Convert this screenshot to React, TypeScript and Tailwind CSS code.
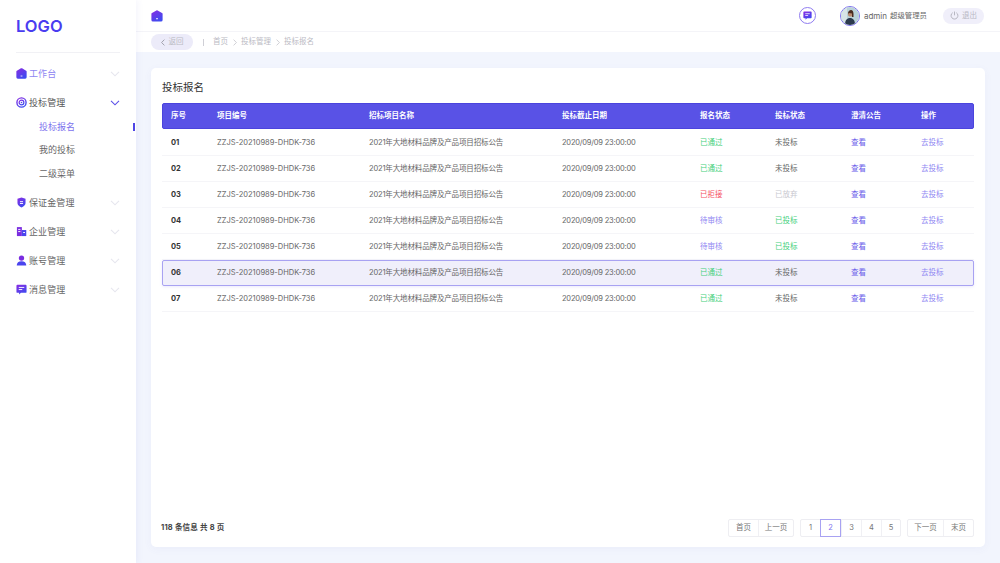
import React from "react";

const font = { fontFamily: '"Inter","Noto Sans CJK SC",sans-serif' };

function Defs() {
  return (
    <svg width="0" height="0" className="absolute">
      <defs>
        <linearGradient id="ig" x1="0" y1="0" x2="0.6" y2="1">
          <stop offset="0" stopColor="#8a2be2" />
          <stop offset="1" stopColor="#3f4bf0" />
        </linearGradient>
      </defs>
    </svg>
  );
}

const IconHome = ({ s = 11 }: { s?: number }) => (
  <svg width={s} height={s} viewBox="0 0 12 12">
    <path d="M5.400.4a1.200 1.200 0 0 1 1.200 0L11 3a1 1 0 0 1 .6.900V10a1.600 1.600 0 0 1-1.600 1.600H2A1.600 1.600 0 0 1 .4 10V3.900A1 1 0 0 1 1 3Z" fill="url(#ig)" />
    <rect x="5" y="8.300" width="2" height="0.900" fill="#fff" />
  </svg>
);
const IconTarget = () => (
  <svg width="11" height="11" viewBox="0 0 12 12" fill="none" stroke="url(#ig)">
    <circle cx="6" cy="6" r="5" strokeWidth="1.500" />
    <circle cx="6" cy="6" r="2.600" strokeWidth="1.300" />
    <circle cx="6" cy="6" r="0.900" fill="#4f46e5" stroke="none" />
  </svg>
);
const IconShield = () => (
  <svg width="11" height="11" viewBox="0 0 12 12">
    <path d="M6 .5 10.400 2v4.600c0 2.300-2.400 4-4.400 4.900-2-.9-4.400-2.600-4.400-4.900V2Z" fill="url(#ig)" />
    <rect x="4.300" y="4.600" width="3.400" height="1" fill="#fff" />
    <rect x="4.300" y="6.600" width="3.400" height="1" fill="#fff" />
  </svg>
);
const IconCompany = () => (
  <svg width="11" height="11" viewBox="0 0 12 12">
    <path d="M1 1.200h5.400v9.800H1Z" fill="#7a2de0" />
    <path d="M6.400 4.400h4.800V11H6.400Z" fill="#4a44ee" />
    <rect x="2.400" y="3.200" width="2.400" height="1" fill="#fff" />
    <rect x="2.400" y="5.600" width="2.400" height="1" fill="#fff" />
    <rect x="7.800" y="6.600" width="2" height="1" fill="#fff" />
  </svg>
);
const IconUser = () => (
  <svg width="11" height="11" viewBox="0 0 12 12">
    <circle cx="6" cy="3.400" r="2.900" fill="#7a2de0" />
    <path d="M.8 11.400c0-3 2-4.600 5.200-4.600s5.200 1.600 5.200 4.600Z" fill="#4a44ee" />
  </svg>
);
const IconMsg = ({ s = 11 }: { s?: number }) => (
  <svg width={s} height={s} viewBox="0 0 12 12">
    <path d="M1.500.8h9a1 1 0 0 1 1 1v6.800a1 1 0 0 1-1 1H5.400L3.400 11.500V9.600H1.500a1 1 0 0 1-1-1V1.800a1 1 0 0 1 1-1Z" fill="url(#ig)" />
    <rect x="3" y="3.200" width="6" height="1" fill="#fff" />
    <rect x="3" y="5.600" width="3.800" height="1" fill="#fff" />
  </svg>
);
const Chevron = ({ active }: { active?: boolean }) => (
  <svg width="10" height="6" viewBox="0 0 10 6" fill="none" stroke={active ? "#5b50e8" : "#e6e6ee"} strokeWidth="1.100">
    <path d="M1 .8 5 4.800 9 .8" />
  </svg>
);
const Sep = () => (
  <svg width="4" height="7" viewBox="0 0 4 7" fill="none" stroke="#c4c4cc" strokeWidth="0.800">
    <path d="M.6.6 3.400 3.500.6 6.400" />
  </svg>
);

function MenuItem({ icon, label, color, active }: { icon: React.ReactNode; label: string; color: string; active?: boolean }) {
  return (
    <div className="flex items-center h-[29px] pl-4 pr-[16px]">
      <span className="w-[13px] flex items-center shrink-0">{icon}</span>
      <span className={`text-[9px] ${color} tracking-[0.1px]`}>{label}</span>
      <span className="ml-auto flex"><Chevron active={active} /></span>
    </div>
  );
}

function Sidebar() {
  return (
    <aside className="w-[136px] shrink-0 bg-white shadow-[2px_0_6px_rgba(90,90,200,0.06)] z-10 flex flex-col">
      <div className="h-[53px] mx-4 border-b border-[#f1f1f5] flex items-start pt-[14px]">
        <span className="text-[16.500px] leading-6 font-semibold text-[#4a3cf0]" style={{ fontFamily: '"Inter",sans-serif' }}>LOGO</span>
      </div>
      <div className="mt-[6px] flex flex-col">
        <MenuItem icon={<IconHome />} label="工作台" color="text-[#8f86f2]" />
        <MenuItem icon={<IconTarget />} label="投标管理" color="text-[#555]" active />
        <div className="flex flex-col -mt-[2px]">
          <div className="relative h-[24px] flex items-center pl-[39px] text-[9px] text-[#7d72ee]">
            投标报名
            <span className="absolute right-[1px] top-[8px] w-[2px] h-[8px] bg-[#4f46e5]" />
          </div>
          <div className="h-[22px] flex items-center pl-[39px] text-[9px] text-[#666]">我的投标</div>
          <div className="h-[25px] flex items-center pl-[39px] text-[9px] text-[#666]">二级菜单</div>
        </div>
        <div className="h-[2px]" />
        <MenuItem icon={<IconShield />} label="保证金管理" color="text-[#666]" />
        <MenuItem icon={<IconCompany />} label="企业管理" color="text-[#666]" />
        <MenuItem icon={<IconUser />} label="账号管理" color="text-[#666]" />
        <MenuItem icon={<IconMsg />} label="消息管理" color="text-[#666]" />
      </div>
    </aside>
  );
}

function Header() {
  return (
    <div className="bg-white">
      <div className="h-[32px] border-b border-[#f4f4f8] flex items-center pl-[15px] pr-4">
        <IconHome s={12} />
        <div className="ml-auto flex items-center">
          <span className="w-[17px] h-[17px] rounded-full border border-[#8f7cf0] flex items-center justify-center">
            <IconMsg s={9} />
          </span>
          <span className="ml-[24px] w-[20px] h-[20px] rounded-full border border-[#7d72ee] overflow-hidden flex items-center justify-center">
            <svg width="18" height="18" viewBox="0 0 18 18">
              <rect width="18" height="18" fill="#b9d2d8" />
              <rect x="0" y="0" width="6" height="18" fill="#d7e4e6" />
              <path d="M4 18c0-5 2-7 5-7s5 2 5 7Z" fill="#2c3a4e" />
              <circle cx="9.500" cy="7" r="2.600" fill="#b98a70" />
              <path d="M7 7c0-3 1.500-4 3-4s2.500 1.500 2.500 4v3h-1.500V6.500L8 6Z" fill="#4a2c20" />
            </svg>
          </span>
          <span className="ml-[4px] text-[8px] text-[#666]">admin</span>
          <span className="ml-[3px] text-[7.400px] text-[#666]">超级管理员</span>
          <span className="ml-[16px] w-[41px] h-[16px] rounded-full bg-[#f0effa] flex items-center justify-center gap-[3px] text-[7.500px] text-[#b9b9c4]">
            <svg width="9" height="9" viewBox="0 0 10 10" fill="none" stroke="#a9a9b4" strokeWidth="0.900">
              <path d="M3 1.900a3.800 3.800 0 1 0 4 0" />
              <path d="M5 .6V4.800" />
            </svg>
            退出
          </span>
        </div>
      </div>
      <div className="h-[20px] flex items-center pl-[15px] text-[7.500px] text-[#bbbbc4]">
        <span className="w-[42px] h-[16px] rounded-full bg-[#ecebf9] flex items-center justify-center gap-[4px]">
          <svg width="4" height="7" viewBox="0 0 4 7" fill="none" stroke="#9a9aa6" strokeWidth="0.900">
            <path d="M3.400.6.600 3.500l2.800 2.900" />
          </svg>
          返回
        </span>
        <span className="ml-[10px] w-px h-[7px] bg-[#cfcfd6]" />
        <span className="ml-[9px]">首页</span>
        <span className="mx-[4.500px] flex"><Sep /></span>
        <span>投标管理</span>
        <span className="mx-[4.500px] flex"><Sep /></span>
        <span>投标报名</span>
      </div>
    </div>
  );
}

type S = { t: string; c: string };
const pass: S = { t: "已通过", c: "text-[#45d07c]" };
const rej: S = { t: "已拒接", c: "text-[#f5505f]" };
const wait: S = { t: "待审核", c: "text-[#8f86f2]" };
const no: S = { t: "未投标", c: "text-[#666]" };
const gave: S = { t: "已放弃", c: "text-[#c8c8cf]" };
const did: S = { t: "已投标", c: "text-[#45d07c]" };
const rows: [string, S, S][] = [
  ["01", pass, no],
  ["02", pass, no],
  ["03", rej, gave],
  ["04", wait, did],
  ["05", wait, did],
  ["06", pass, no],
  ["07", pass, no],
];
const grid = "grid grid-cols-[46px_152px_193px_138px_75px_76px_70px_1fr] items-center";

function Table() {
  return (
    <div>
      <div className={`${grid} h-[26px] mb-px pl-[8px] rounded-[2px] bg-[#5952e6] border border-[#4b44dd] text-[7.500px] font-bold text-white`}>
        {["序号", "项目编号", "招标项目名称", "投标截止日期", "报名状态", "投标状态", "澄清公告", "操作"].map((h) => (
          <span key={h}>{h}</span>
        ))}
      </div>
      {rows.map(([n, a, b]) => {
        const sel = n === "06";
        return (
          <div
            key={n}
            className={`${grid} h-[26px] text-[7.500px] text-[#666] ${sel ? "pl-[8px] bg-[#f0effb] border border-[#a8a2f2] rounded-[2px] shadow-[0_1px_3px_rgba(120,110,240,0.15)]" : "pl-[9px] border-b border-[#f5f5f8]"}`}
          >
            <span className="font-bold text-[#333]">{n}</span>
            <span>ZZJS-20210989-DHDK-736</span>
            <span className="tracking-[-0.14px]">2021年大地材料品牌及产品项目招标公告</span>
            <span className="tracking-[-0.2px]">2020/09/09 23:00:00</span>
            <span className={a.c}>{a.t}</span>
            <span className={b.c}>{b.t}</span>
            <span className="text-[#6a60ea]">查看</span>
            <span className="text-[#8f86f2]">去投标</span>
          </div>
        );
      })}
    </div>
  );
}

function PageBtn({ label, w, active }: { label: string; w: string; active?: boolean }) {
  return (
    <span
      className={`${w} flex items-center justify-center text-[7.500px] ${active ? "h-[18px] -my-px border border-[#a8a2f2] text-[#7d72ee]" : "h-[16px] border-l border-[#f0f0f4] first:border-l-0 text-[#777]"}`}
    >
      {label}
    </span>
  );
}
const group = "flex rounded-[2px] border border-[#eeeef2] bg-white";

function Pagination() {
  return (
    <div className="mt-auto flex items-center">
      <span className="-ml-px text-[7.500px] font-bold text-[#444] tracking-[0.2px]">118 条信息 共 8 页</span>
      <div className="ml-auto flex gap-[6px]">
        <div className={group}>
          <PageBtn label="首页" w="w-[29px]" />
          <PageBtn label="上一页" w="w-[35px]" />
        </div>
        <div className={group}>
          <PageBtn label="1" w="w-[19px]" />
          <PageBtn label="2" w="w-[21px]" active />
          <PageBtn label="3" w="w-[20px]" />
          <PageBtn label="4" w="w-[20px]" />
          <PageBtn label="5" w="w-[19px]" />
        </div>
        <div className={group}>
          <PageBtn label="下一页" w="w-[35px]" />
          <PageBtn label="末页" w="w-[30px]" />
        </div>
      </div>
    </div>
  );
}

export default function App() {
  return (
    <div className="flex h-[563px] w-[1000px] overflow-hidden bg-[#f2f5fd]" style={font}>
      <Defs />
      <Sidebar />
      <main className="flex-1 flex flex-col min-w-0">
        <Header />
        <div className="flex-1 pt-4 pb-4 pl-[15px] pr-[15px] flex">
          <section className="flex-1 rounded-[5px] bg-white shadow-[0_2px_8px_rgba(90,90,200,0.05)] px-[11px] pt-[12px] pb-[10px] flex flex-col">
            <h1 className="text-[10.500px] leading-[16px] text-[#333] mb-[7px]">投标报名</h1>
            <Table />
            <Pagination />
          </section>
        </div>
      </main>
    </div>
  );
}
